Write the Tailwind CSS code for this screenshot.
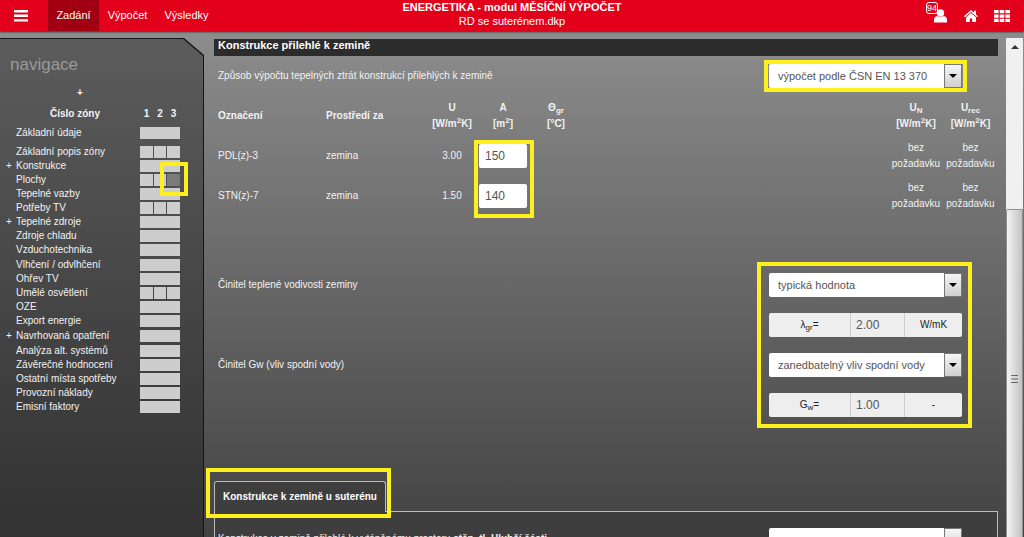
<!DOCTYPE html>
<html lang="cs">
<head>
<meta charset="utf-8">
<title>Energetika</title>
<script src="https://cdn.jsdelivr.net/npm/@tailwindcss/browser@4"></script>
</head>
<body class="h-screen overflow-hidden flex flex-col bg-linear-to-b from-[#929292] to-[#434343] font-['Liberation_Sans',Arial,sans-serif] text-[10px] leading-4 text-[#f2f2f2]">

<header class="relative z-10 h-[31px] shrink-0 grid grid-cols-[1fr_auto_1fr] bg-[#e2001a] shadow-[0_1px_2px_#3a2a2a]">
  <nav class="flex text-[11px] text-white">
    <button type="button" aria-label="Menu" class="w-12 flex items-center pl-[14px]">
      <svg class="w-[14px] h-3" viewBox="0 0 14 12" fill="#fff"><path d="M0 0h14v2.400H0zM0 4.600h14V7H0zM0 9.200h14v2.400H0z"/></svg>
    </button>
    <a href="#" class="w-[51px] flex items-center justify-center pb-[2px] bg-[#a00012]">Zadání</a>
    <a href="#" class="w-[57px] flex items-center justify-center pb-[2px]">Výpočet</a>
    <a href="#" class="w-[61px] flex items-center justify-center pb-[2px]">Výsledky</a>
  </nav>
  <div class="text-center text-[11px] leading-[14px] text-white">
    <h1 class="font-bold">ENERGETIKA - modul MĚSÍČNÍ VÝPOČET</h1>
    <p>RD se suterénem.dkp</p>
  </div>
  <div class="flex justify-end items-center gap-4 pr-[14px]">
    <button type="button" aria-label="Uživatel" class="relative w-[14px] h-[14px]">
      <svg class="size-[14px]" viewBox="0 0 14 14" fill="#fff"><circle cx="6.500" cy="4" r="3.700"/><path d="M0 13.500V11q0-3.600 3.200-4.100Q6.500 9.200 9.800 6.900 13 7.400 13 11v2.500z"/></svg>
      <span class="absolute -left-2 -top-[7px] size-3 border border-white rounded-[3px] text-[9px] leading-[10px] text-white flex justify-center">94</span>
    </button>
    <a href="#" aria-label="Domů"><svg class="size-[14px]" viewBox="0 0 14 14" fill="#fff"><path d="M7 1 0 7.200l.8 1L7 2.900l6.200 5.300.8-1-2-1.800V1.800h-2v1.800z"/><path d="M7 4 2 8.300V13h3.800V9.500h2.400V13H12V8.300z"/></svg></a>
    <button type="button" aria-label="Aplikace"><svg class="w-4 h-3" viewBox="0 0 16 12" fill="#fff"><path d="M0 0h4.600v3.300H0zM5.700 0h4.600v3.300H5.700zM11.400 0H16v3.300h-4.600zM0 4.400h4.600v3.300H0zM5.700 4.400h4.600v3.300H5.700zM11.400 4.400H16v3.300h-4.600zM0 8.800h4.600v3.200H0zM5.700 8.800h4.600v3.200H5.700zM11.400 8.800H16v3.200h-4.600z"/></svg></button>
  </div>
</header>

<div class="flex flex-1 min-h-0 pt-[7px]">
  <aside class="w-[204px] shrink-0 bg-[#151515] pt-px pr-px [clip-path:polygon(0_0,184px_0,204px_17px,204px_100%,0_100%)]">
    <div class="h-full bg-linear-to-b from-[#5c5c5c] to-[#323232] [clip-path:polygon(0_0,183px_0,203px_17px,203px_100%,0_100%)] pt-[14px]">
      <h2 class="pl-[10px] text-[17px] leading-6 text-[#9a9a9a]">navigace</h2>
      <div class="pl-[77px] pt-[10px] font-bold leading-3">+</div>
      <div class="flex pl-[50px] pt-[9px] pb-[5px] font-bold leading-3">
        <span class="w-[90px]">Číslo zóny</span>
        <span class="w-[13px] text-center">1</span><span class="w-[14px] text-center">2</span><span class="w-[13px] text-center">3</span>
      </div>
      <nav id="nav" class="flex flex-col leading-[14px]"></nav>
    </div>
  </aside>

  <main class="flex-1 min-w-0 pl-[10px] pr-2 pt-px flex flex-col">
    <h2 class="h-[17px] shrink-0 px-1 bg-[#2c2c2c] font-bold text-[11px] leading-3 text-white">Konstrukce přilehlé k zemině</h2>

    <div class="h-10 shrink-0 flex items-center justify-between pl-1 pr-9">
      <label for="method">Způsob výpočtu tepelných ztrát konstrukcí přilehlých k zemině</label>
      <div class="relative w-[193px] h-6">
        <select id="method" class="appearance-none block w-full h-6 pl-[9px] pr-5 rounded-[2px] bg-white text-[#555] text-[11px]"><option>výpočet podle ČSN EN 13 370</option></select>
        <span class="pointer-events-none absolute right-0 top-0 w-[18px] h-6 border border-[#777] bg-linear-to-b from-[#f6f6f6] to-[#cfcfcf] flex items-center justify-center"><svg class="w-2 h-1" viewBox="0 0 8 4"><path d="M0 0h8L4 4z"/></svg></span>
        <span class="pointer-events-none absolute -inset-x-[5px] -inset-y-1 border-4 border-[#fdf01e]"></span>
      </div>
    </div>

    <table class="w-full table-fixed">
      <colgroup><col class="w-[108px]"><col class="w-[103px]"><col class="w-[54px]"><col class="w-[48px]"><col class="w-[58px]"><col><col class="w-[54px]"><col class="w-[55px]"></colgroup>
      <thead>
        <tr class="h-10">
          <th class="pl-1 text-left">Označení</th>
          <th class="pl-1 text-left">Prostředí za</th>
          <th>U<br>[W/m<sup class="text-[8px] leading-none">2</sup>K]</th>
          <th>A<br>[m<sup class="text-[8px] leading-none">2</sup>]</th>
          <th>Θ<sub class="text-[8px] leading-none">gr</sub><br>[°C]</th>
          <td></td>
          <th>U<sub class="text-[8px] leading-none">N</sub><br>[W/m<sup class="text-[8px] leading-none">2</sup>K]</th>
          <th>U<sub class="text-[8px] leading-none">rec</sub><br>[W/m<sup class="text-[8px] leading-none">2</sup>K]</th>
        </tr>
      </thead>
      <tbody class="text-center">
        <tr class="h-10">
          <td class="pl-1 text-left">PDL(z)-3</td><td class="pl-1 text-left">zemina</td><td>3.00</td>
          <td><div class="relative h-6"><input aria-label="A PDL(z)-3" value="150" class="block w-12 h-6 mx-auto px-[6px] rounded-[2px] bg-white text-xs text-[#555]"><span class="pointer-events-none absolute -left-[5px] -top-1 w-[60px] h-[78px] border-4 border-[#fdf01e]"></span></div></td>
          <td></td><td></td><td>bez požadavku</td><td>bez požadavku</td>
        </tr>
        <tr class="h-10">
          <td class="pl-1 text-left">STN(z)-7</td><td class="pl-1 text-left">zemina</td><td>1.50</td>
          <td><input aria-label="A STN(z)-7" value="140" class="block w-12 h-6 mx-auto px-[6px] rounded-[2px] bg-white text-xs text-[#555]"></td>
          <td></td><td></td><td>bez požadavku</td><td>bez požadavku</td>
        </tr>
      </tbody>
    </table>

    <div class="mt-[49px] flex justify-between pl-1 pr-9">
      <div>
        <label for="soil" class="h-20 flex items-start pt-3">Činitel teplené vodivosti zeminy</label>
        <label for="water" class="h-20 flex items-start pt-3">Činitel Gw (vliv spodní vody)</label>
      </div>
      <div class="relative w-[193px] flex flex-col gap-4 py-2 text-[11px] text-[#555]">
        <div class="relative">
          <select id="soil" class="appearance-none block w-full h-6 pl-[9px] pr-5 rounded-[2px] bg-white"><option>typická hodnota</option></select>
          <span class="pointer-events-none absolute right-0 top-0 w-[18px] h-6 border border-[#777] bg-linear-to-b from-[#f6f6f6] to-[#cfcfcf] flex items-center justify-center"><svg class="w-2 h-1" viewBox="0 0 8 4"><path d="M0 0h8L4 4z"/></svg></span>
        </div>
        <div class="flex h-6 rounded-[2px] overflow-hidden bg-[#eee] divide-x divide-[#ccc]">
          <label for="lambda" class="w-[82px] flex items-center justify-center text-[10px] text-[#222]"><span>λ<sub class="text-[8px] leading-none">gr</sub>=</span></label>
          <input id="lambda" value="2.00" readonly class="w-[54px] px-[5px] text-xs">
          <span class="flex-1 flex items-center justify-center text-[10px] text-[#222]">W/mK</span>
        </div>
        <div class="relative">
          <select id="water" class="appearance-none block w-full h-6 pl-[9px] pr-5 rounded-[2px] bg-white"><option>zanedbatelný vliv spodní vody</option></select>
          <span class="pointer-events-none absolute right-0 top-0 w-[18px] h-6 border border-[#777] bg-linear-to-b from-[#f6f6f6] to-[#cfcfcf] flex items-center justify-center"><svg class="w-2 h-1" viewBox="0 0 8 4"><path d="M0 0h8L4 4z"/></svg></span>
        </div>
        <div class="flex h-6 rounded-[2px] overflow-hidden bg-[#eee] divide-x divide-[#ccc]">
          <label for="gw" class="w-[82px] flex items-center justify-center text-[10px] text-[#222]"><span>G<sub class="text-[8px] leading-none">w</sub>=</span></label>
          <input id="gw" value="1.00" readonly class="w-[54px] px-[5px] text-xs">
          <span class="flex-1 flex items-center justify-center text-[10px] text-[#222]">-</span>
        </div>
        <span class="pointer-events-none absolute -left-3 -right-[10px] -top-[3px] -bottom-[3px] border-4 border-[#fdf01e]"></span>
      </div>
    </div>

    <section class="mt-14 flex flex-col flex-1">
      <div class="flex">
        <button type="button" class="relative z-10 h-[31px] px-2 -mb-px rounded-t-[3px] border border-b-0 border-[#bbb] bg-[#3e3e3e] font-bold text-white">Konstrukce k zemině u suterénu<span class="pointer-events-none absolute -left-[9px] -right-[6px] -top-[14px] -bottom-[6px] border-4 border-[#fdf01e]"></span></button>
      </div>
      <div class="flex-1 border border-b-0 border-[#bbb] bg-[#3e3e3e] pl-[3px] pr-[35px] pt-4 flex justify-between">
        <label for="basement" class="pt-[3px]">Konstrukce v zemině přilehlé k vytápěnému prostoru <b>stěn, tl. Hlubší části</b></label>
        <div class="relative w-[193px]">
          <select id="basement" class="appearance-none block w-full h-6 rounded-[2px] bg-white"><option></option></select>
          <span class="pointer-events-none absolute right-0 top-0 w-[18px] h-6 border border-[#777] bg-linear-to-b from-[#f6f6f6] to-[#cfcfcf]"></span>
        </div>
      </div>
    </section>
  </main>

  <div class="w-[17px] mr-px shrink-0 bg-[#f0f0f0] flex flex-col items-center">
    <svg class="w-2 h-1 mt-[7px] shrink-0" viewBox="0 0 8 4"><path d="M0 4h8L4 0z" fill="#333"/></svg>
    <div class="mt-40 flex-1 self-stretch border border-b-0 border-[#8f8f8f] rounded-t-[2px] bg-linear-to-r from-[#f4f4f4] to-[#c2c2c2] flex justify-center pt-[165px]">
      <svg class="w-[7px] h-2" viewBox="0 0 7 8" fill="#666"><path d="M0 0h7v1H0zM0 3.500h7v1H0zM0 7h7v1H0z"/></svg>
    </div>
  </div>
</div>

<script>
// A trailing "/3" marks a row split by zone, "!" marks the active zone cell.
const groups = [
  ['Základní údaje'],
  ['Základní popis zóny/3', '+Konstrukce', 'Plochy/3!', 'Tepelné vazby', 'Potřeby TV/3', '+Tepelné zdroje', 'Zdroje chladu', 'Vzduchotechnika'],
  ['Vlhčení / odvlhčení', 'Ohřev TV', 'Umělé osvětlení/3', 'OZE', 'Export energie'],
  ['+Navrhovaná opatření'],
  ['Analýza alt. systémů', 'Závěrečné hodnocení', 'Ostatní místa spotřeby', 'Provozní náklady', 'Emisní faktory']
];
const mark = '<span class="pointer-events-none absolute -right-2 -top-[12px] w-7 h-[34px] border-4 border-[#fdf01e]"></span>';
document.getElementById('nav').innerHTML = groups.map((rows, g) =>
  `<ul class="${g === 0 ? 'pt-px mb-[5px]' : 'mb-px'}">` + rows.map(r => {
    const active = r.endsWith('!'), plus = r[0] === '+', split = /\/3!?$/.test(r);
    const name = r.replace(/^\+/, '').replace(/\/3!?$/, '');
    const cell = '<span class="flex-1 bg-[#cdcdcd]"></span>';
    const cells = active ? cell + cell + '<span class="flex-1 relative bg-[#7b7b7b]">' + mark + '</span>' : split ? cell.repeat(3) : cell;
    return `<li class="flex items-center h-[14px]"><span class="w-[16px] pl-[6px]">${plus ? '+' : ''}</span><a href="#" class="w-[124px] whitespace-nowrap">${name}</a><span class="w-10 h-3 flex gap-px">${cells}</span></li>`;
  }).join('') + '</ul>').join('');
</script>
</body>
</html>
